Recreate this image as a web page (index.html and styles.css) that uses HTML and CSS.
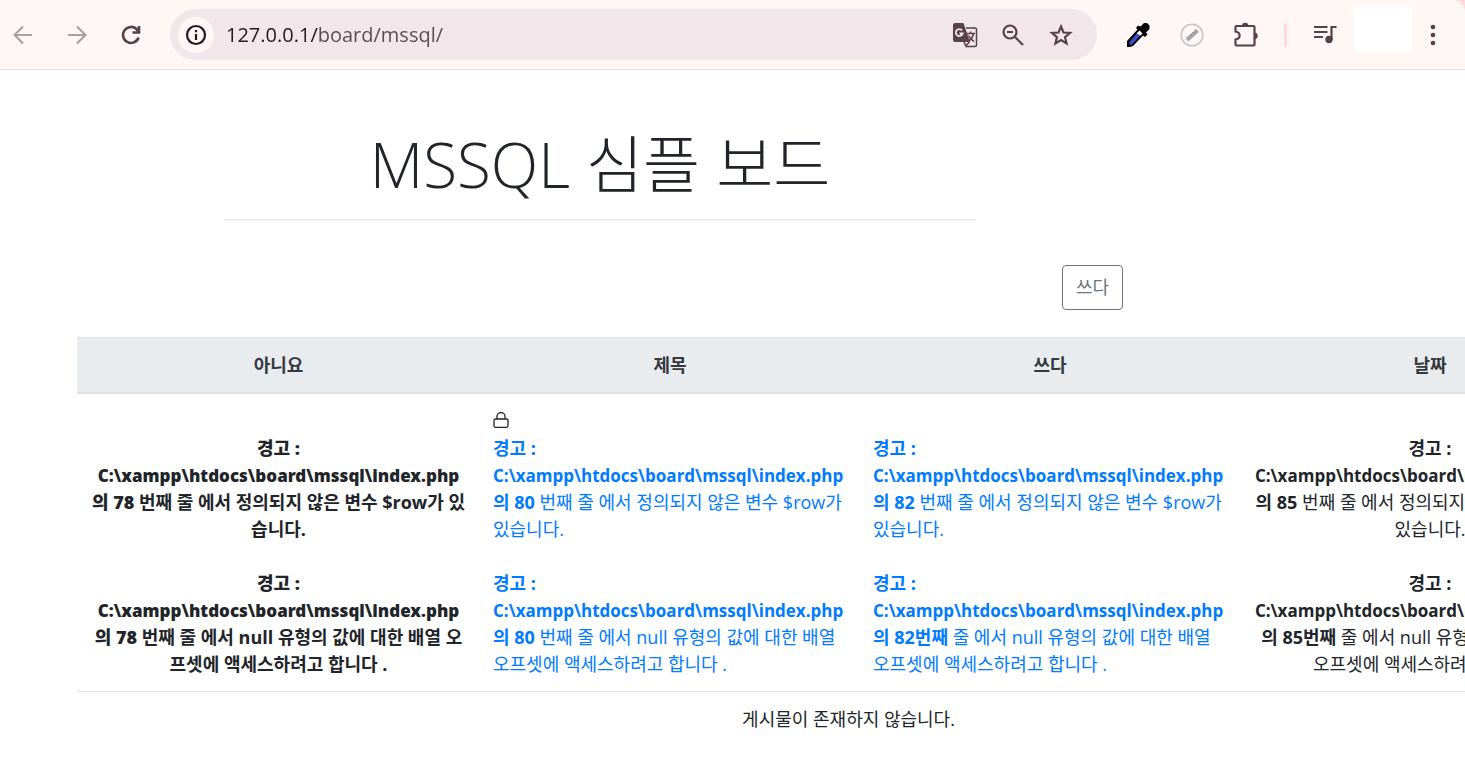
FILE: index.html
```html
<!DOCTYPE html>
<html lang="ko">
<head>
    <meta charset="UTF-8">
    <meta name="viewport" content="width=device-width, initial-scale=1.0">
    <title>MSSQL 심플 보드</title>
    <link rel="stylesheet" href="styles.css">
</head>
<body>
    <div class="browser">
        <nav class="toolbar">
            <div class="nav-buttons">
                <button type="button" class="icon-button faded" aria-label="Back">
                    <svg width="20" height="20" viewBox="0 0 20 20"><path d="M19 10H2M10 1.5L1.5 10l8.500 8.500" /></svg>
                </button>
                <button type="button" class="icon-button faded" aria-label="Forward">
                    <svg width="20" height="20" viewBox="0 0 20 20"><path d="M1 10h17M10 1.500l8.500 8.500-8.500 8.500" /></svg>
                </button>
                <button type="button" class="icon-button" aria-label="Reload">
                    <svg class="bold" width="20" height="20" viewBox="0 0 20 20"><path d="M17.600 12.500A8 8 0 1 1 16 4.600L17.500 6.500M18 1v6.500h-6.500" /></svg>
                </button>
            </div>

            <div class="address-bar">
                <button type="button" class="icon-button site-info" aria-label="Site information">
                    <svg width="22" height="22" viewBox="0 0 22 22"><circle cx="11" cy="11" r="9" /><path d="M11 10v6M11 6v2.200" /></svg>
                </button>
                <input type="text" class="address" aria-label="Address" value="127.0.0.1/board/mssql/">
                <div class="address-actions">
                    <button type="button" class="icon-button" aria-label="Translate">
                        <svg width="26" height="26" viewBox="0 0 26 26">
                            <path class="fill" d="M3 1h8.500l1.500 4.500 5 14.500H3a2 2 0 0 1-2-2V3a2 2 0 0 1 2-2z" />
                            <path class="thin" d="M14 6h9a1.500 1.500 0 0 1 1.500 1.500v15.500a1.500 1.500 0 0 1-1.500 1.500h-9l-2-4.500M13.500 24l4-4" />
                            <path class="light" d="M10 8.300A3.500 3.500 0 1 0 10.700 11.500H7.500" />
                            <path class="thin" d="M14.500 11.500h8.500M18.700 9.500v2M21.500 11.500c-.6 3.500-2.500 6-5 7.500M16.500 13.500c1 2.500 3 4.500 5.500 6" />
                        </svg>
                    </button>
                    <button type="button" class="icon-button" aria-label="Zoom">
                        <svg width="24" height="24" viewBox="0 0 24 24"><circle cx="9" cy="9" r="6.500" /><path d="M14 14l8 8M6 9h6" /></svg>
                    </button>
                    <button type="button" class="icon-button" aria-label="Bookmark">
                        <svg width="24" height="24" viewBox="0 0 24 24"><path d="M12 3.500l2.500 6 6.500.5-5 4.200 1.600 6.300L12 17.100l-5.600 3.400L8 14.200 3 10l6.500-.5z" /></svg>
                    </button>
                </div>
            </div>

            <div class="extensions">
                <button type="button" class="icon-button" aria-label="Color picker">
                    <svg width="24" height="26" viewBox="0 0 24 26">
                        <path class="ink" d="M1 25v-6L11.500 7.500 10 6l2-2.500 2.500 1L18 1h3l2.500 2.500V7l-3.500 3.500 1.500 2-2.500 2.500-2-1.500L7 24l-3 1z" />
                        <path class="liquid" d="M3.500 20l7-8.300 4 1.500L6 22.500 3.500 23z" />
                        <path class="glass" d="M10.500 11.500L13.500 8.500l3 3-2 2z" />
                    </svg>
                </button>
                <button type="button" class="icon-button" aria-label="Ruler">
                    <svg width="24" height="24" viewBox="0 0 24 24"><circle class="ring" cx="12" cy="12" r="10.800" /><path class="ruler" d="M7 17L17.500 7.500" /><path class="ticks" d="M7.500 13.500l2 2M10 11l2 2M12.500 9l2 2M15 6.500l2 2" /></svg>
                </button>
                <button type="button" class="icon-button" aria-label="Extensions">
                    <svg width="26" height="26" viewBox="0 0 26 26">
                        <path d="M3.500 4h17a1 1 0 0 1 1 1v17.500a1 1 0 0 1-1 1h-17a1 1 0 0 1-1-1v-5c5.500-1 5.500-7 0-8V5a1 1 0 0 1 1-1z" />
                        <path class="fill" d="M9 4a3.200 3.200 0 0 1 6.400 0zM21.500 10.500a3.200 3.200 0 0 1 0 6.400z" />
                    </svg>
                </button>
            </div>
            <span class="separator"></span>
            <button type="button" class="icon-button" aria-label="Media">
                <svg width="24" height="20" viewBox="0 0 24 20"><path d="M1 2h13.500M1 7h13.500M1 12h9M18.500 15V2H23.500" /><circle class="fill" cx="16" cy="14.500" r="3.700" /></svg>
            </button>
            <button type="button" class="profile" aria-label="Profile"></button>
            <button type="button" class="icon-button" aria-label="Menu">
                <svg width="6" height="22" viewBox="0 0 6 22"><circle class="fill" cx="3" cy="3" r="2.300" /><circle class="fill" cx="3" cy="11" r="2.300" /><circle class="fill" cx="3" cy="19" r="2.300" /></svg>
            </button>
        </nav>
    </div>

    <main class="page">
        <div class="container">
            <h1 class="display">MSSQL 심플 보드</h1>
            <div class="actions">
                <button type="button" class="btn">쓰다</button>
            </div>
        </div>

        <table class="table">
            <colgroup>
                <col class="col-no">
                <col class="col-text">
                <col class="col-text">
                <col class="col-text">
            </colgroup>
            <thead>
                <tr>
                    <th scope="col">아니요</th>
                    <th scope="col">제목</th>
                    <th scope="col">쓰다</th>
                    <th scope="col">날짜</th>
                </tr>
            </thead>
            <tbody>
                <tr>
                    <th scope="row">
                        <br>
                        <b>경고 :</b><br>
                        <b class="path">C:\xampp\htdocs\board\mssql\index.php</b><br>
                        <b>의 78</b> 번째 줄 에서 정의되지 않은 변수 $row가 있<br>
                        습니다.<br>
                        <br>
                        <b>경고 :</b><br>
                        <b class="path">C:\xampp\htdocs\board\mssql\index.php</b><br>
                        <b>의 78</b> 번째 줄 에서 null 유형의 값에 대한 배열 오<br>
                        프셋에 액세스하려고 합니다 .
                    </th>
                    <td>
                        <svg class="lock" width="16" height="16" viewBox="0 0 16 16"><rect x="1" y="7" width="14" height="8.300" rx="1.500" /><path d="M4 7V4.500a4 4 0 0 1 8 0V7" /></svg><br>
                        <a href="#">
                            <b>경고 :</b><br>
                            <b class="path">C:\xampp\htdocs\board\mssql\index.php</b><br>
                            <b>의 80</b> 번째 줄 에서 정의되지 않은 변수 $row가<br>
                            있습니다.<br>
                            <br>
                            <b>경고 :</b><br>
                            <b class="path">C:\xampp\htdocs\board\mssql\index.php</b><br>
                            <b>의 80</b> 번째 줄 에서 null 유형의 값에 대한 배열<br>
                            오프셋에 액세스하려고 합니다 .
                        </a>
                    </td>
                    <td>
                        <br>
                        <a href="#">
                            <b>경고 :</b><br>
                            <b class="path">C:\xampp\htdocs\board\mssql\index.php</b><br>
                            <b>의 82</b> 번째 줄 에서 정의되지 않은 변수 $row가<br>
                            있습니다.<br>
                            <br>
                            <b>경고 :</b><br>
                            <b class="path">C:\xampp\htdocs\board\mssql\index.php</b><br>
                            <b>의 82번째</b> 줄 에서 null 유형의 값에 대한 배열<br>
                            오프셋에 액세스하려고 합니다 .
                        </a>
                    </td>
                    <td class="center">
                        <br>
                        <b>경고 :</b><br>
                        <b class="path">C:\xampp\htdocs\board\mssql\index.php</b><br>
                        <b>의 85</b> 번째 줄 에서 정의되지 않은 변수 $row가<br>
                        있습니다.<br>
                        <br>
                        <b>경고 :</b><br>
                        <b class="path">C:\xampp\htdocs\board\mssql\index.php</b><br>
                        <b>의 85번째</b> 줄 에서 null 유형의 값에 대한 배열<br>
                        오프셋에 액세스하려고 합니다 .
                    </td>
                </tr>
                <tr>
                    <td class="center" colspan="4">게시물이 존재하지 않습니다.</td>
                </tr>
            </tbody>
        </table>
    </main>
</body>
</html>
```
FILE: styles.css
```css
* {
    box-sizing: border-box;
}

body {
    margin: 0;
    background-color: #fff;
    color: #212529;
    font-family: "Open Sans", "Noto Sans CJK KR", sans-serif;
    font-size: 18px;
    line-height: 27px;
    overflow-x: hidden;
}

button,
input {
    font: inherit;
    border: none;
    padding: 0;
    background: none;
}

/* browser toolbar */
.browser {
    background-color: #ffd9de;
}

.toolbar {
    display: flex;
    align-items: center;
    height: 70px;
    padding: 0 14px 0 5px;
    background-color: #fff7f6;
    border-bottom: 1px solid #f3dcde;
    border-top-right-radius: 12px;
}

.nav-buttons,
.extensions {
    display: flex;
    gap: 18px;
}

.icon-button {
    display: flex;
    flex: none;
    align-items: center;
    justify-content: center;
    width: 36px;
    height: 36px;
    border-radius: 50%;
    color: #57414a;
    cursor: pointer;
}

.icon-button svg {
    fill: none;
    stroke: currentColor;
    stroke-width: 2.2;
}

.icon-button.faded {
    color: #aea1a4;
}

.icon-button .bold {
    stroke-width: 2.6;
}

.icon-button .fill {
    fill: currentColor;
    stroke: none;
}

.icon-button .thin {
    stroke-width: 1.5;
}

.icon-button .light {
    stroke: #f1e6ea;
    stroke-width: 1.8;
}

.icon-button .ink {
    fill: #000;
    stroke: none;
}

.icon-button .liquid {
    fill: #3a50c8;
    stroke: none;
}

.icon-button .glass {
    fill: #fff;
    stroke: none;
}

.icon-button .ring {
    stroke: #c8c6c7;
    stroke-width: 1.6;
}

.icon-button .ruler {
    stroke: #aaa;
    stroke-width: 4;
}

.icon-button .ticks {
    stroke: #888;
    stroke-width: 1;
}

.address-bar {
    display: flex;
    flex: 1;
    align-items: center;
    height: 51px;
    margin: 0 23px 0 21px;
    padding: 0 18px 0 8px;
    background-color: #f1e6ea;
    border-radius: 26px;
}

.icon-button.site-info {
    background-color: #fff7f6;
    color: #231a1d;
}

.address {
    flex: 1;
    min-width: 0;
    margin-left: 12px;
    background: linear-gradient(to right, #21191c 92px, #584a50 92px);
    background-clip: text;
    -webkit-background-clip: text;
    -webkit-text-fill-color: transparent;
    font-size: 20px;
    outline: none;
}

.address-actions {
    display: flex;
    gap: 12px;
}

.separator {
    width: 3px;
    height: 24px;
    margin: 0 20px;
    background-color: #ffd9de;
    border-radius: 2px;
}

.profile {
    width: 58px;
    height: 46px;
    margin: 0 3px 12px 11px;
    background-color: #fff;
}

/* board */
.page {
    padding: 56px 0 0 77px;
}

.container {
    max-width: 1046px;
}

.display {
    margin: 0 147px 45px;
    padding-bottom: 16px;
    border-bottom: 1px solid #e5e5e5;
    font-size: 62px;
    font-weight: 200;
    line-height: 77px;
    text-align: center;
}

.actions {
    display: flex;
    justify-content: flex-end;
    margin-bottom: 27px;
}

.btn {
    padding: 8px 13px;
    border: 1px solid #6c757d;
    border-radius: 4px;
    color: #6c757d;
    cursor: pointer;
}

.table {
    width: 1543px;
    table-layout: fixed;
    border-collapse: collapse;
    white-space: nowrap;
}

.col-no {
    width: 403px;
}

.col-text {
    width: 380px;
}

.table th,
.table td {
    padding: 14px 13px 13px;
    border-top: 1px solid #dee2e6;
    vertical-align: top;
}

.table th {
    font-weight: 700;
    text-align: center;
}

.table thead th {
    background-color: #e9ecef;
    border-bottom: 2px solid #dee2e6;
    color: #343a40;
}

.table b {
    font-weight: 700;
}

.table th b {
    font-weight: 800;
}

.table .path {
    font-size: 17px;
}

.table th .path {
    font-family: "Noto Sans", "Open Sans", sans-serif;
    font-weight: 900;
}

.table .center {
    text-align: center;
}

.table a {
    color: #007bff;
    text-decoration: none;
}

.table a:hover {
    text-decoration: underline;
}

.lock {
    fill: none;
    stroke: #212529;
    stroke-width: 1.3;
    vertical-align: baseline;
}
```
